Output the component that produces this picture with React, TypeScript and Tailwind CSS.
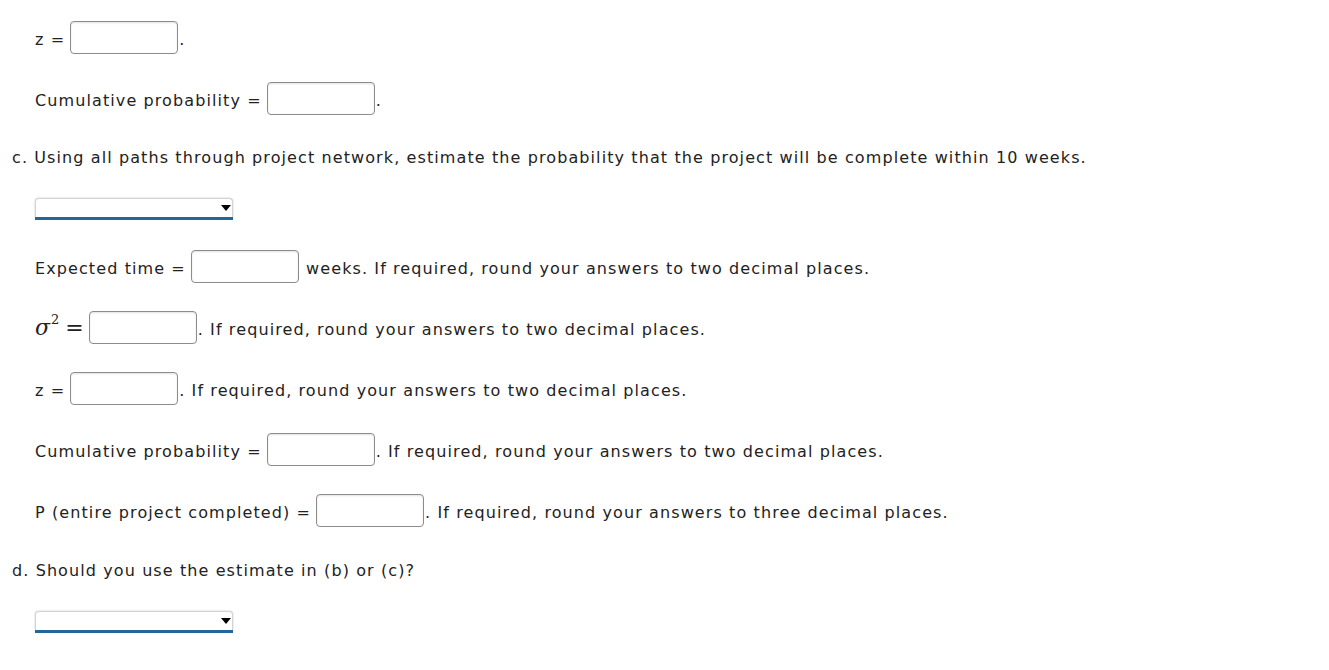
import React from 'react'

const font = { fontFamily: '"DejaVu Sans", Verdana, sans-serif' }

function Box({ className = '' }: { className?: string }) {
  return (
    <span
      className={`inline-block w-[108px] h-[33px] border border-[#8c8c8c] rounded-[4px] bg-white shadow-[inset_0_1px_2px_rgba(0,0,0,0.12)] ${className}`}
    />
  )
}

function Dropdown() {
  return (
    <div className="ml-[35px] w-[198px] h-[22px] relative">
      <div className="h-[19px] bg-white rounded-t-[4px] border border-[#d4d4d4] border-b-0 shadow-[0_0_2px_rgba(0,0,0,0.25)]" />
      <div className="h-[3px] bg-[#23679a]" />
      <svg className="absolute right-[2px] top-[7px]" width="10" height="6" viewBox="0 0 10 6">
        <path d="M0 0 L10 0 L5 6 Z" fill="#000" />
      </svg>
    </div>
  )
}

function Row({ label, after, className = '' }: { label: React.ReactNode; after?: string; className?: string }) {
  return (
    <div className={`flex items-center h-[33px] pl-[35px] ${className}`}>
      <span className="relative top-[2px] whitespace-pre">{label}</span>
      <Box className="ml-[5px]" />
      <span className="ml-[1px] relative top-[2px] whitespace-pre">{after ?? '.'}</span>
    </div>
  )
}

export default function App() {
  return (
    <div className="w-[1329px] h-[670px] bg-white text-[#222] text-[16px] leading-[20px] tracking-[1.1px] pt-[21px]" style={font}>
      <Row label="z =" />
      <Row label="Cumulative probability =" className="mt-[28px]" />

      <p className="mt-[33px] pl-[12px]">
        c. Using all paths through project network, estimate the probability that the project will be complete within 10 weeks.
      </p>

      <div className="mt-[30px]">
        <Dropdown />
      </div>

      <Row label="Expected time =" after=" weeks. If required, round your answers to two decimal places." className="mt-[30px]" />

      <div className="flex items-center h-[33px] pl-[35px] mt-[28px]">
        <span className="flex items-start tracking-normal" style={{ fontFamily: '"DejaVu Serif", "Liberation Serif", serif' }}>
          <span className="text-[22px] leading-[28px] italic">σ</span>
          <span className="text-[13px] leading-[14px] ml-[1px] -mt-[1px]">2</span>
          <span className="text-[22px] leading-[28px] ml-[6px]">=</span>
        </span>
        <Box className="ml-[5px]" />
        <span className="ml-[1px] relative top-[2px] whitespace-pre">. If required, round your answers to two decimal places.</span>
      </div>

      <Row label="z =" after=". If required, round your answers to two decimal places." className="mt-[28px]" />
      <Row label="Cumulative probability =" after=". If required, round your answers to two decimal places." className="mt-[28px]" />
      <Row label="P (entire project completed) =" after=". If required, round your answers to three decimal places." className="mt-[28px]" />

      <p className="mt-[34px] pl-[12px]">d. Should you use the estimate in (b) or (c)?</p>

      <div className="mt-[30px]">
        <Dropdown />
      </div>
    </div>
  )
}
